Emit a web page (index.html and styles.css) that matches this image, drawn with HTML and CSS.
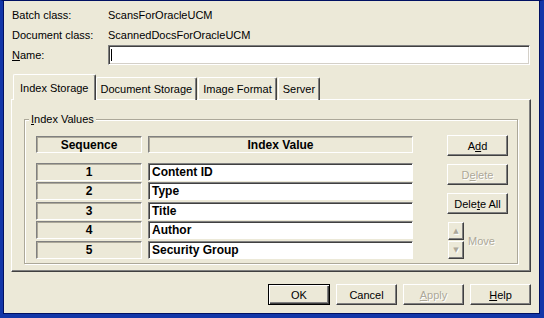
FILE: index.html
```html
<!DOCTYPE html>
<html lang="en">
<head>
    <meta charset="UTF-8">
    <title>Index Storage</title>
    <link rel="stylesheet" href="styles.css">
</head>
<body>
    <div class="window">
        <div class="info">
            <span class="label">Batch class:</span>
            <span>ScansForOracleUCM</span>
            <span class="label">Document class:</span>
            <span>ScannedDocsForOracleUCM</span>
            <span class="label"><u>N</u>ame:</span>
            <div class="text-input"><span class="caret"></span></div>
        </div>

        <div class="tabs">
            <div class="tab active">Index Storage</div>
            <div class="tab">Document Storage</div>
            <div class="tab">Image Format</div>
            <div class="tab">Server</div>
        </div>

        <div class="panel">
            <fieldset class="group">
                <legend><u>I</u>ndex Values</legend>
                <div class="group-body">
                    <div class="table">
                        <div class="head">Sequence</div>
                        <div class="head">Index Value</div>
                        <div class="seq">1</div>
                        <div class="value">Content ID</div>
                        <div class="seq">2</div>
                        <div class="value">Type</div>
                        <div class="seq">3</div>
                        <div class="value">Title</div>
                        <div class="seq">4</div>
                        <div class="value">Author</div>
                        <div class="seq">5</div>
                        <div class="value">Security Group</div>
                    </div>
                    <div class="side">
                        <button class="btn">A<u>d</u>d</button>
                        <button class="btn" disabled>D<u>e</u>lete</button>
                        <button class="btn">Dele<u>t</u>e All</button>
                        <div class="move">
                            <div class="arrows">
                                <button class="arrow" disabled>&#9650;</button>
                                <button class="arrow" disabled>&#9660;</button>
                            </div>
                            <span class="disabled-text">Move</span>
                        </div>
                    </div>
                </div>
            </fieldset>
        </div>

        <div class="footer">
            <button class="btn default">OK</button>
            <button class="btn">Cancel</button>
            <button class="btn" disabled><u>A</u>pply</button>
            <button class="btn"><u>H</u>elp</button>
        </div>
    </div>
</body>
</html>
```

FILE: styles.css
```css
* {
    box-sizing: border-box;
}
body {
    margin: 0;
    font-family: 'Liberation Sans', Arial, sans-serif;
    font-size: 11px;
    color: #000;
    background: #ece9d8;
}
.window {
    width: 544px;
    height: 318px;
    background: #ece9d8;
    border-top: 1px solid #001062;
    border-left: 3px solid #1236a8;
    border-right: 4px solid #1236a8;
    border-bottom: 4px solid #1236a8;
    box-shadow: inset 1px 0 0 #001062, inset -1px -1px 0 #001062;
    display: flex;
    flex-direction: column;
}
.info {
    display: grid;
    grid-template-columns: 96px 1fr;
    grid-template-rows: 21px 20px 20px;
    align-items: center;
    padding: 3px 10px 0 9px;
}
.text-input {
    height: 20px;
    background: #fff;
    border: 1px solid;
    border-color: #808080 #fff #fff #808080;
    box-shadow: inset 1px 1px 0 #404040, inset -1px -1px 0 #d4d0c8;
    padding: 3px 2px;
}
.caret {
    display: block;
    width: 1px;
    height: 12px;
    background: #000;
}
.tabs {
    display: flex;
    align-items: flex-end;
    height: 26px;
    margin: 9px 0 0 10px;
    position: relative;
    z-index: 1;
}
.tab {
    height: 23px;
    padding: 0 4px;
    line-height: 22px;
    border: 1px solid;
    border-bottom: none;
    border-color: #fff #404040 #fff #fff;
    box-shadow: inset -1px 0 0 #808080;
    border-radius: 2px 2px 0 0;
    margin-left: 1px;
}
.tab.active {
    height: 26px;
    padding: 0 6px;
    margin-left: 0;
    margin-right: -1px;
    background: #ece9d8;
    line-height: 26px;
}
.panel {
    height: 173px;
    margin: -1px 9px 0 8px;
    border: 1px solid;
    border-color: #fff #404040 #404040 #fff;
    box-shadow: inset -1px -1px 0 #808080;
    padding: 13px 12px 0 12px;
}
.group {
    margin: 0;
    padding: 0;
    height: 151px;
    border: 1px solid #aca899;
    box-shadow: 1px 1px 0 #fff, inset 1px 1px 0 #fff;
}
.group legend {
    padding: 0 2px;
    margin-left: 4px;
    background: #ece9d8;
}
.group-body {
    display: flex;
    align-items: flex-start;
    padding: 11px 0 0 11px;
}
.table {
    display: grid;
    grid-template-columns: 106px 265px;
    grid-template-rows: 25px repeat(5, 18px);
    column-gap: 6px;
    row-gap: 1.5px;
}
.head, .seq {
    font-weight: bold;
    font-size: 12px;
    text-align: center;
    line-height: 16px;
    border: 1px solid;
    border-color: #808080 #fff #fff #808080;
    box-shadow: inset 1px 1px 0 #aca899;
}
.head {
    height: 17px;
}
.value {
    font-weight: bold;
    font-size: 12px;
    line-height: 16px;
    padding-left: 3px;
    background: #fff;
    border: 1px solid;
    border-color: #808080 #fff #fff #808080;
    box-shadow: inset 1px 1px 0 #404040;
}
.side {
    display: flex;
    flex-direction: column;
    gap: 8px;
    margin: -1px 0 0 34px;
}
.btn {
    flex: none;
    width: 61px;
    height: 21px;
    font-family: inherit;
    font-size: 11px;
    color: #000;
    background: #ece9d8;
    border: 1px solid;
    border-color: #fff #404040 #404040 #fff;
    box-shadow: inset -1px -1px 0 #808080;
    padding: 0;
}
.btn:disabled, .disabled-text {
    color: #aca899;
    text-shadow: 1px 1px 0 #fff;
}
.btn.default {
    border: 1px solid #000;
    box-shadow: inset 1px 1px 0 #fff, inset -1px -1px 0 #404040, inset -2px -2px 0 #808080;
    width: 62px;
}
.move {
    display: flex;
    align-items: center;
    gap: 4px;
    margin-left: 1px;
}
.arrows {
    display: flex;
    flex-direction: column;
    gap: 1px;
}
.arrow {
    flex: none;
    width: 16px;
    height: 18px;
    padding: 0;
    font-family: 'DejaVu Sans', sans-serif;
    font-size: 7px;
    line-height: 16px;
    color: #aca899;
    text-shadow: 1px 1px 0 #fff;
    background: #ece9d8;
    border: 1px solid;
    border-color: #fff #404040 #404040 #fff;
    box-shadow: inset -1px -1px 0 #808080;
}
.footer {
    display: flex;
    justify-content: flex-end;
    gap: 6px;
    padding: 12px 9px 0 0;
}
.footer .btn {
    width: 61px;
}
.footer .btn.default {
    width: 62px;
}
```
